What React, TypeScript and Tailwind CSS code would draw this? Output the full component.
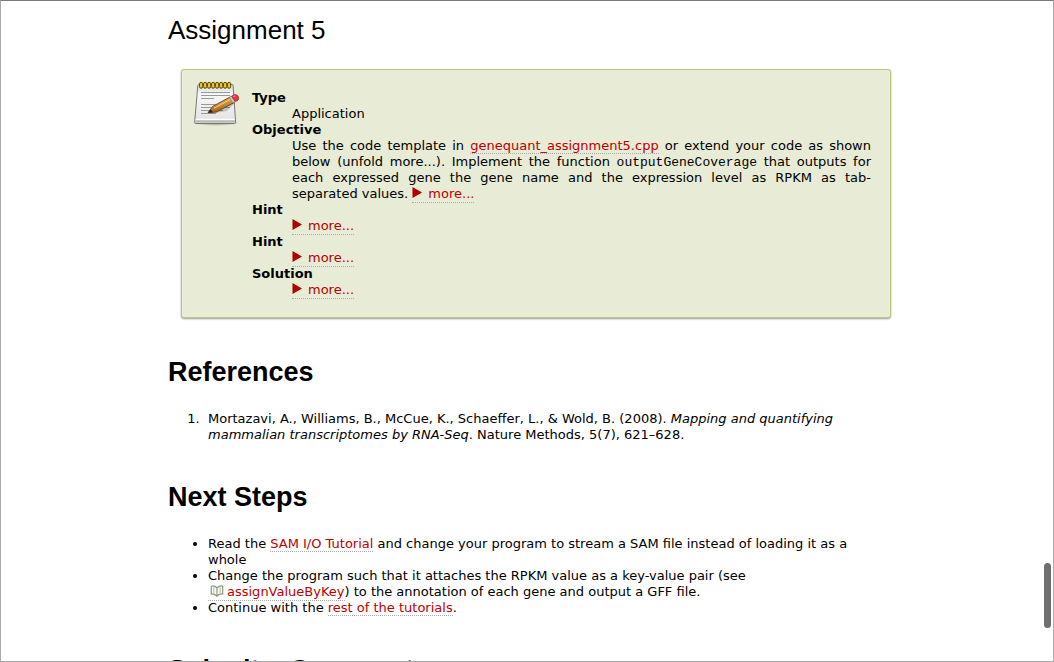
import type { ReactNode } from "react";

const linkStyle = "border-b border-dotted border-[#aaaaaa] text-[#bb0000]";

function TextLink({ href, children }: { href: string; children: ReactNode }) {
  return (
    <a href={href} className={linkStyle}>
      {children}
    </a>
  );
}

function MoreButton() {
  return (
    <button type="button" className={`-my-px ${linkStyle}`}>
      <svg viewBox="0 0 10 11" className="mr-1.5 inline-block h-[11px] w-2.5 align-baseline" aria-hidden="true">
        <path d="M0.5 0L10 5.5L0.5 11Z" fill="#b00000" />
      </svg>
      more...
    </button>
  );
}

function NotepadIcon() {
  return (
    <svg viewBox="0 0 48 48" className="size-12 shrink-0" aria-hidden="true">
      <defs>
        <linearGradient id="paper" x1="0" y1="0" x2="0" y2="1">
          <stop offset="0" stopColor="#d4d4d4" />
          <stop offset="0.25" stopColor="#f7f7f7" />
          <stop offset="0.85" stopColor="#e6e6e6" />
          <stop offset="1" stopColor="#ffffff" />
        </linearGradient>
        <linearGradient id="wood" x1="0" y1="0" x2="0.4" y2="1">
          <stop offset="0" stopColor="#edc078" />
          <stop offset="0.5" stopColor="#d99a3e" />
          <stop offset="1" stopColor="#91591a" />
        </linearGradient>
        <radialGradient id="shade">
          <stop offset="0" stopColor="#000" stopOpacity="0.4" />
          <stop offset="1" stopColor="#000" stopOpacity="0" />
        </radialGradient>
      </defs>
      <ellipse cx="24" cy="43" rx="24" ry="3" fill="url(#shade)" />
      <path d="M6.7 4.5H40.3Q41 4.5 41.1 5.5L43.6 42Q43.7 43.5 42.5 43.5H4Q2.5 43.5 2.7 42L5.8 5.5Q5.9 4.5 6.7 4.5Z" fill="url(#paper)" stroke="#777" />
      <path d="M3.6 40.3H43L43.2 42.8H3.2Z" fill="#b9b9b9" />
      <path d="M3.7 39.5H42.8" stroke="#fff" />
      <path d="M9 12.5H38M9 15.5H38M9 18.5H22M9 24.5H38M9 27.5H38M9 30.5H31M9 33.5H24" stroke="#999" />
      {[8, 12, 16, 20, 24, 28, 32, 36].map((x) => (
        <g key={x}>
          <rect x={x - 0.5} y="2.3" width="3.2" height="6" rx="1.6" fill="#d5ac20" stroke="#645006" />
          <path d={`M${x + 1} 3.6V7`} stroke="#fff06c" strokeWidth="0.8" />
        </g>
      ))}
      <path d="M18 34L35 31L43 23L39 21Z" fill="#000" opacity="0.18" />
      <path d="M16 32.7L20.5 26.5L38.5 16.8L42.2 22.5L24.5 32Z" fill="url(#wood)" stroke="#68420f" strokeWidth="0.9" />
      <path d="M22 28.3L39.2 18.9" stroke="#f5cf8e" />
      <path d="M16 32.7L18.6 29.3L20.8 32.2Z" fill="#222" />
      <path d="M37.4 17.6L39.7 16.2L43.3 21.6L41 23Z" fill="#c5c5c5" stroke="#777" strokeWidth="0.6" />
      <path d="M39.6 16.2L42.8 14.6Q45.4 14.3 46.5 17Q47.2 19.3 45.8 20.4L43.3 21.6Z" fill="#e33a42" stroke="#9d1d23" strokeWidth="0.7" />
      <path d="M41.2 16.6L43.2 15.8" stroke="#ff9497" />
    </svg>
  );
}

function BookIcon() {
  return (
    <svg viewBox="0 0 14 12" fill="none" stroke="#8d9777" strokeWidth="1.2" className="mr-[3px] ml-0.5 inline-block h-3 w-3.5 align-[-1px]" aria-hidden="true">
      <path d="M7 3Q4.5 0.2 1.3 1.2V9Q4.5 8.7 6.8 11.2Q9.5 8.7 12.7 9V1.2Q9.5 0.2 7 3V11" />
      <path d="M3.8 1.6V8.8M10.2 1.6V8.8" stroke="#bcc3ac" />
    </svg>
  );
}

const sectionTitle = "mt-[38px] mb-[23px] font-[Liberation_Sans,Arial,sans-serif] text-[27px] leading-8 font-bold";
const detail = "ml-10 text-justify";

export default function App() {
  return (
    <div className="relative h-screen overflow-hidden border border-[#aaaaaa] border-t-[#7a7a7a] bg-white font-[Verdana,DejaVu_Sans,sans-serif] text-[13px] leading-4 text-black">
      <main className="pt-[13px] pr-[149px] pl-[167px]">
        <h2 className="mb-[23px] font-[Liberation_Sans,Arial,sans-serif] text-[26px] leading-8">Assignment 5</h2>

        <section className="mx-[13px] flex items-start gap-3 rounded-[3px] border border-[#bdc683] bg-[#e8ebd5] pt-5 pr-[19px] pb-[19px] pl-2.5 shadow-[0_1px_2px_#999999]">
          <div className="-mt-2.5 shrink-0">
            <NotepadIcon />
          </div>
          <dl className="min-w-0 grow">
            <dt className="font-bold">Type</dt>
            <dd className={detail}>Application</dd>
            <dt className="font-bold">Objective</dt>
            <dd className={detail}>
              Use the code template in <TextLink href="#template">genequant_assignment5.cpp</TextLink> or extend your code as shown below (unfold more...). Implement the function{" "}
              <code className="font-[Liberation_Mono,monospace] text-[13px] leading-none">outputGeneCoverage</code> that outputs for each expressed gene the gene name and the expression level as RPKM as tab-separated values. <MoreButton />
            </dd>
            <dt className="font-bold">Hint</dt>
            <dd className={detail}>
              <MoreButton />
            </dd>
            <dt className="font-bold">Hint</dt>
            <dd className={detail}>
              <MoreButton />
            </dd>
            <dt className="font-bold">Solution</dt>
            <dd className={detail}>
              <MoreButton />
            </dd>
          </dl>
        </section>

        <h1 className={sectionTitle}>References</h1>
        <ol className="list-decimal pl-10">
          <li className="marker:content-['1.__']">
            Mortazavi, A., Williams, B., McCue, K., Schaeffer, L., &amp; Wold, B. (2008). <em>Mapping and quantifying mammalian transcriptomes by RNA-Seq</em>. Nature Methods, 5(7), 621–628.
          </li>
        </ol>

        <h1 className={sectionTitle}>Next Steps</h1>
        <ul className="list-disc pr-5 pl-10">
          <li>
            Read the <TextLink href="#sam">SAM I/O Tutorial</TextLink> and change your program to stream a SAM file instead of loading it as a whole
          </li>
          <li>
            Change the program such that it attaches the RPKM value as a key-value pair (see{" "}
            <a href="#assign" className={`-mb-px inline-block ${linkStyle}`}>
              <BookIcon />
              assignValueByKey
            </a>
            ) to the annotation of each gene and output a GFF file.
          </li>
          <li>
            Continue with the <TextLink href="#tutorials">rest of the tutorials</TextLink>.
          </li>
        </ul>

        <h1 className={sectionTitle}>Submit a Comment</h1>
      </main>
      <div className="absolute top-[85%] right-0.5 mt-px h-[65px] w-[7px] rounded-full bg-[#6e6e6e]" aria-hidden="true" />
    </div>
  );
}
